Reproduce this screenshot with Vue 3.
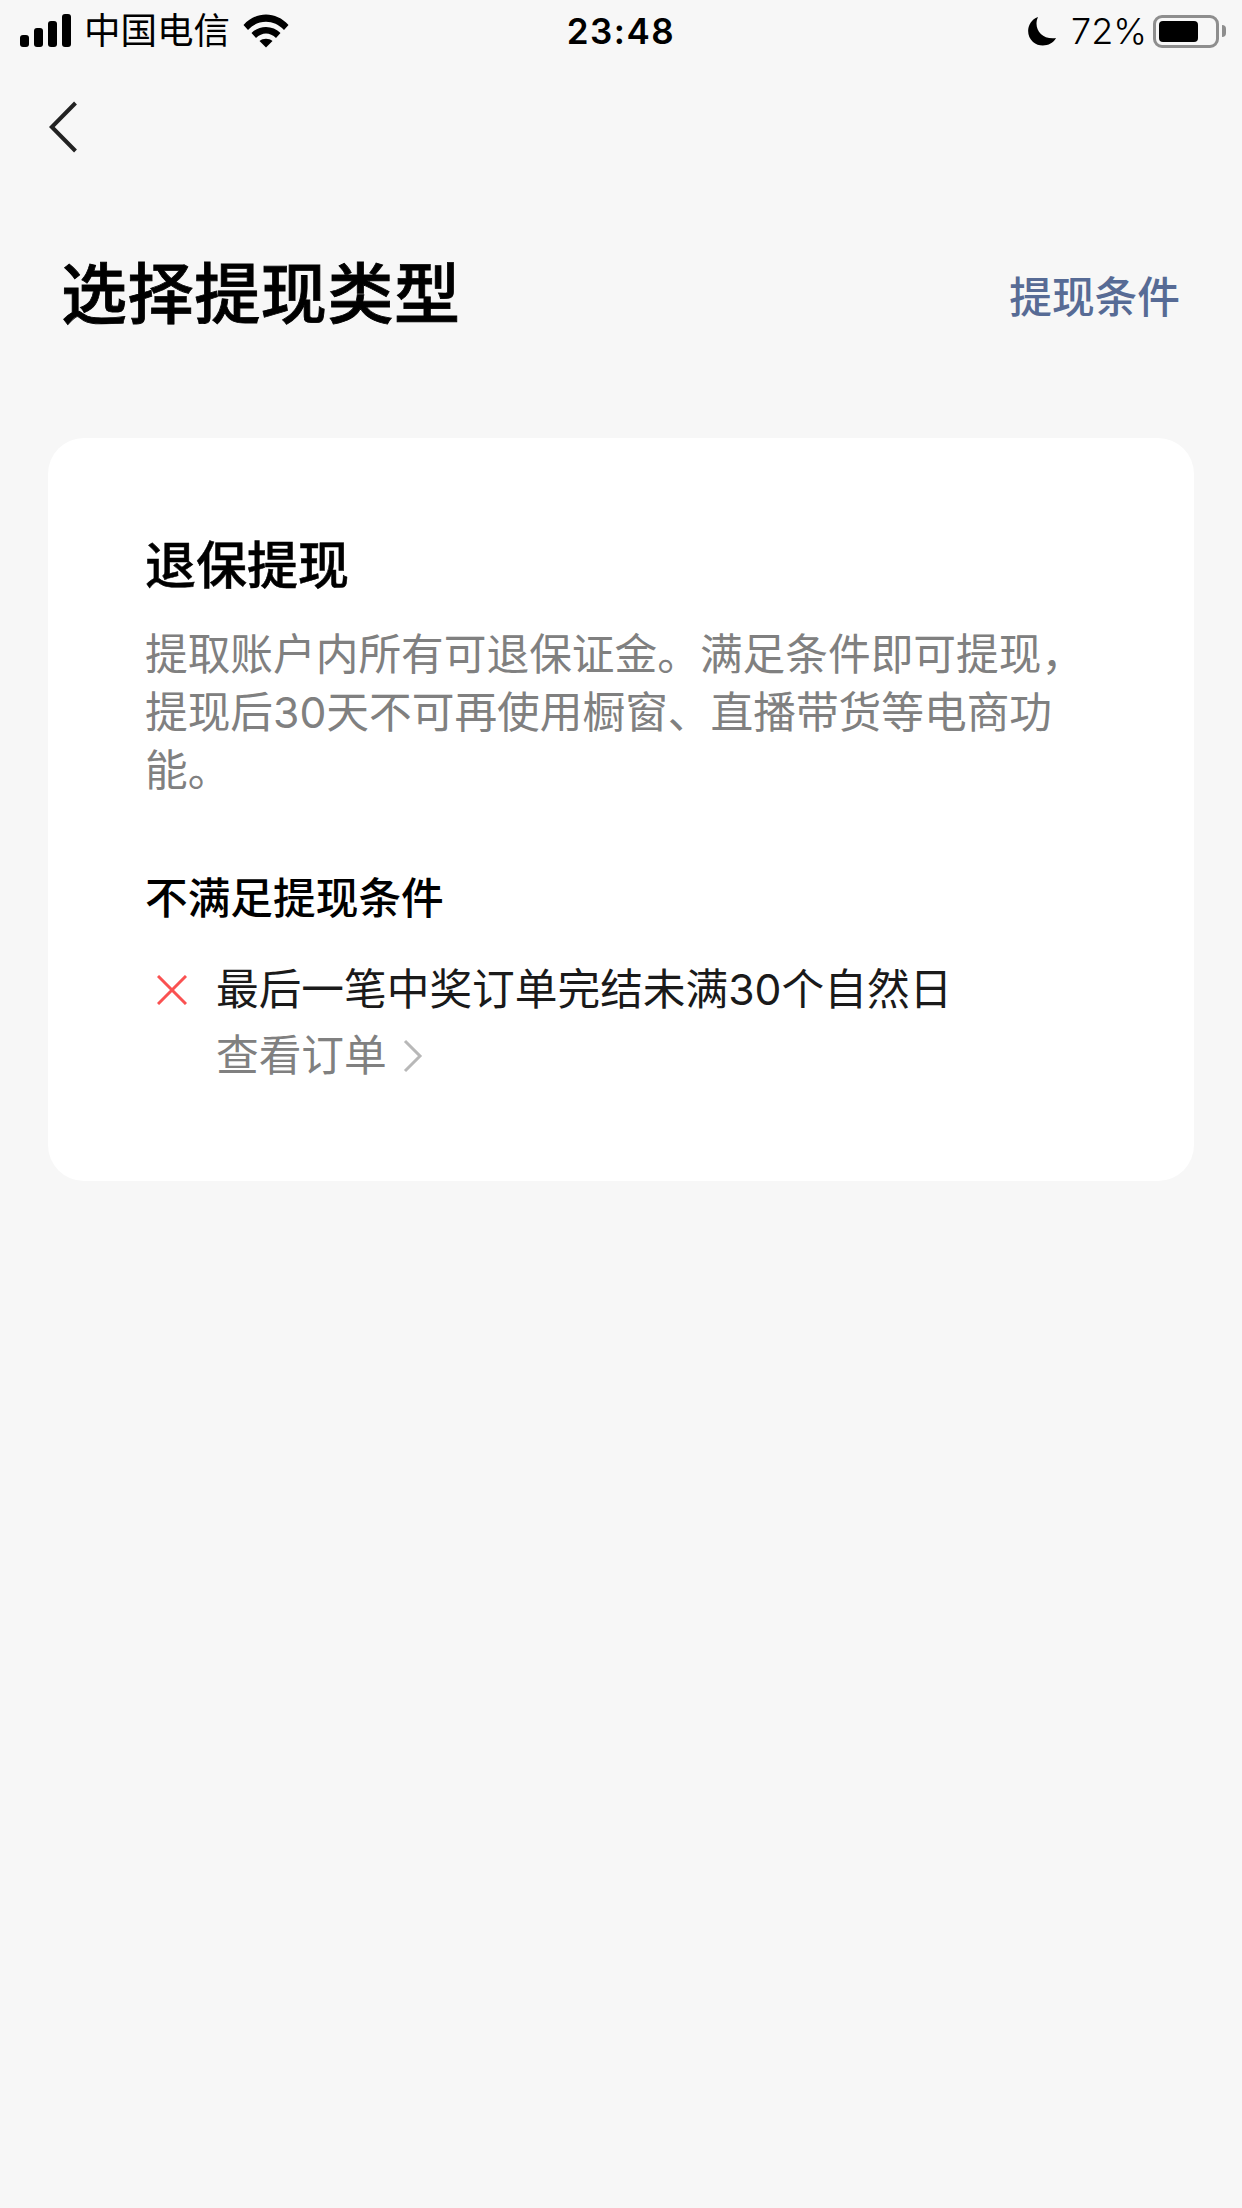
<script setup>
const desc = '提取账户内所有可退保证金。满足条件即可提现，提现后30天不可再使用橱窗、直播带货等电商功能。'
</script>

<template>
  <div class="page">
    <div class="status">
      <div class="status-left">
        <svg class="signal" width="54" height="34" viewBox="0 0 54 34">
          <rect x="0" y="21" width="9" height="12" rx="3" />
          <rect x="14" y="14" width="9" height="19" rx="3" />
          <rect x="28" y="7" width="9" height="26" rx="3" />
          <rect x="42" y="0" width="9" height="33" rx="3" />
        </svg>
        <span class="carrier">中国电信</span>
        <svg class="wifi" width="46" height="34" viewBox="0 0 46 34">
          <path d="M0.5 11 C13 -3 33 -3 45.5 11 L41 16 C31 5 15 5 5 16 Z" />
          <path d="M8.5 19 C16 11 30 11 37.5 19 L33 24 C27 18 19 18 13 24 Z" />
          <path d="M16.5 27 C20 24 26 24 29.5 27 L23 33.5 Z" />
        </svg>
      </div>
      <span class="clock">23:48</span>
      <div class="status-right">
        <svg class="moon" width="30" height="30" viewBox="0 0 30 30">
          <path d="M11 1 C6 12 14 24 29 22 C25 30 13 32 6 26 C-2 19 0 5 11 1 Z" />
        </svg>
        <span class="percent">72%</span>
        <div class="battery">
          <div class="battery-level"></div>
        </div>
        <div class="battery-cap"></div>
      </div>
    </div>

    <div class="nav">
      <svg width="30" height="52" viewBox="0 0 30 52">
        <path d="M26.5 2 L2.8 26 L26.5 50" fill="none" stroke="#222" stroke-width="4" />
      </svg>
    </div>

    <div class="header">
      <h1>选择提现类型</h1>
      <span class="link">提现条件</span>
    </div>

    <div class="card">
      <h2>退保提现</h2>
      <p class="desc">{{ desc }}</p>
      <h3>不满足提现条件</h3>
      <div class="reason">
        <svg class="cross" width="30" height="30" viewBox="0 0 30 30">
          <path d="M1 1 L29 29 M29 1 L1 29" stroke="#fa5151" stroke-width="3" fill="none" />
        </svg>
        <div>
          <div class="reason-text">最后一笔中奖订单完结未满30个自然日</div>
          <div class="order-link">
            <span>查看订单</span>
            <svg width="20" height="36" viewBox="0 0 20 36">
              <path d="M2 3 L17 18 L2 33" fill="none" stroke="#b8b8b8" stroke-width="3" />
            </svg>
          </div>
        </div>
      </div>
    </div>
  </div>
</template>

<style scoped>
.page {
  width: 1242px;
  height: 2208px;
  background: #f7f7f7;
  font-family: "Inter", "Noto Sans CJK SC", "Liberation Sans", sans-serif;
  color: #000;
  overflow: hidden;
}

.status {
  height: 62px;
  display: grid;
  grid-template-columns: 1fr auto 1fr;
  align-items: center;
  padding: 0 16px;
}

.status-left,
.status-right {
  display: flex;
  align-items: center;
}

.status-left {
  padding-left: 4px;
}

.status-right {
  justify-content: flex-end;
}

.signal {
  fill: #000;
}

.carrier {
  margin-left: 10px;
  font-size: 36.5px;
  line-height: 62px;
}

.wifi {
  margin-left: 13px;
  fill: #000;
}

.clock {
  font-size: 35px;
  font-weight: 600;
  letter-spacing: 1.5px;
}

.moon {
  fill: #000;
  margin-right: 14px;
}

.percent {
  font-size: 36px;
  font-weight: 300;
  margin-right: 6px;
}

.battery {
  width: 66px;
  height: 33px;
  box-sizing: border-box;
  border: 3px solid #8e8e8e;
  border-radius: 9px;
  padding: 3px;
}

.battery-level {
  width: 39px;
  height: 100%;
  background: #000;
  border-radius: 4px;
}

.battery-cap {
  width: 4px;
  height: 12px;
  margin-left: 3px;
  background: #8e8e8e;
  border-radius: 0 6px 6px 0;
}

.nav {
  height: 52px;
  padding: 39px 0 0 49px;
}

.header {
  display: flex;
  justify-content: space-between;
  align-items: center;
  margin-top: 93px;
  padding: 0 62px 0 61px;
}

h1 {
  margin: 0;
  font-size: 66px;
  line-height: 96px;
  font-weight: 500;
  letter-spacing: 0.6px;
  -webkit-text-stroke: 0.8px #000;
}

.link {
  font-size: 42.7px;
  color: #576b95;
  font-weight: 500;
}

.card {
  margin: 96px 48px 0;
  height: 743px;
  box-sizing: border-box;
  padding: 94px 105px 0 97px;
  background: #fff;
  border-radius: 36px;
}

h2 {
  margin: 0;
  font-size: 51px;
  line-height: 68px;
  font-weight: 500;
  -webkit-text-stroke: 0.5px #000;
}

.desc {
  margin: 26px 0 0;
  font-size: 42.7px;
  line-height: 58px;
  color: #808080;
}

h3 {
  margin: 70px 0 0;
  font-size: 42.7px;
  line-height: 58px;
  font-weight: 500;
}

.reason {
  display: flex;
  margin-top: 33px;
}

.cross {
  flex: none;
  margin: 14px 29px 0 12px;
}

.reason-text {
  font-size: 42.7px;
  line-height: 58px;
  color: #1a1a1a;
}

.order-link {
  display: flex;
  align-items: center;
  gap: 16px;
  margin-top: 8px;
  font-size: 42.7px;
  line-height: 58px;
  color: #808080;
}
</style>

<style>
body {
  background: #f7f7f7;
}
</style>
